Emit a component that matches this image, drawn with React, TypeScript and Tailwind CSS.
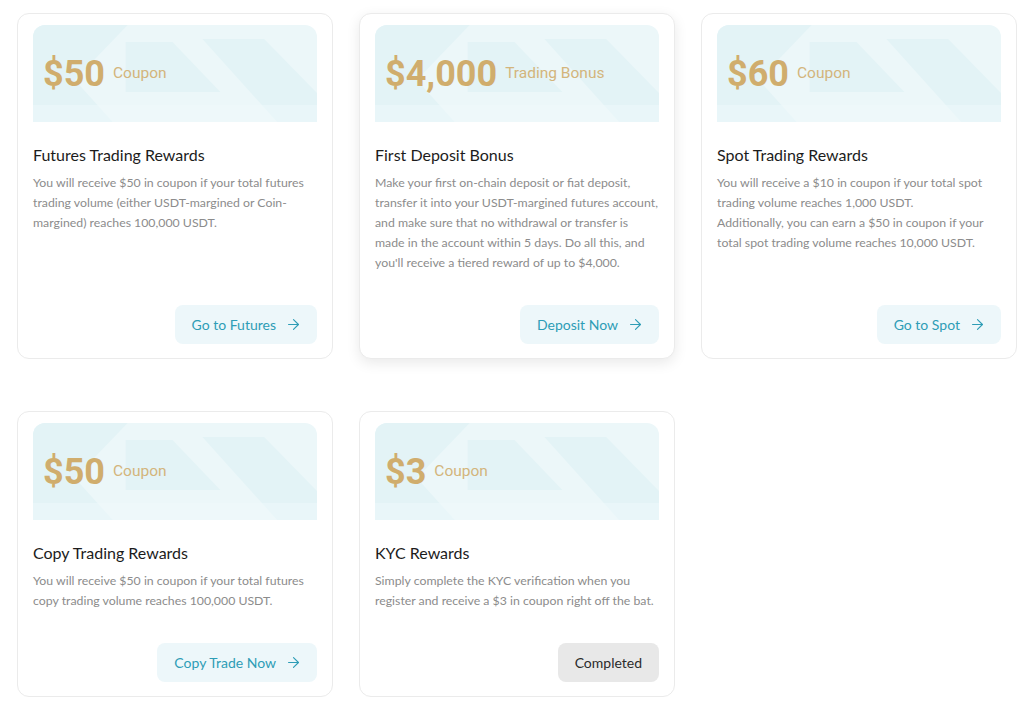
import React from 'react';
import { ArrowRight } from 'lucide-react';

type Reward = {
  amount: string;
  unit: string;
  title: string;
  text: string[];
  action: string;
  done?: boolean;
  raised?: boolean;
};

const rewards: Reward[] = [
  {
    amount: '$50',
    unit: 'Coupon',
    title: 'Futures Trading Rewards',
    text: ['You will receive $50 in coupon if your total futures trading volume (either USDT-margined or Coin-margined) reaches 100,000 USDT.'],
    action: 'Go to Futures',
  },
  {
    amount: '$4,000',
    unit: 'Trading Bonus',
    title: 'First Deposit Bonus',
    text: [
      "Make your first on-chain deposit or fiat deposit, transfer it into your USDT-margined futures account, and make sure that no withdrawal or transfer is made in the account within 5 days. Do all this, and you'll receive a tiered reward of up to $4,000.",
    ],
    action: 'Deposit Now',
    raised: true,
  },
  {
    amount: '$60',
    unit: 'Coupon',
    title: 'Spot Trading Rewards',
    text: [
      'You will receive a $10 in coupon if your total spot trading volume reaches 1,000 USDT.',
      'Additionally, you can earn a $50 in coupon if your total spot trading volume reaches 10,000 USDT.',
    ],
    action: 'Go to Spot',
  },
  {
    amount: '$50',
    unit: 'Coupon',
    title: 'Copy Trading Rewards',
    text: ['You will receive $50 in coupon if your total futures copy trading volume reaches 100,000 USDT.'],
    action: 'Copy Trade Now',
  },
  {
    amount: '$3',
    unit: 'Coupon',
    title: 'KYC Rewards',
    text: ['Simply complete the KYC verification when you register and receive a $3 in coupon right off the bat.'],
    action: 'Completed',
    done: true,
  },
];

function BannerPattern() {
  return (
    <svg className="absolute inset-0 h-full w-full" viewBox="0 0 285 97" preserveAspectRatio="none">
      <rect width="285" height="97" fill="#ecf7f9" />
      <polygon points="0,0 95,0 42,55 80,97 0,97" fill="#e3f3f6" />
      <polygon points="93,17 140,17 188,67 93,67" fill="#e3f3f6" />
      <polygon points="170,14 232,14 285,68 285,97 245,97" fill="#e3f3f6" />
      <rect y="80" width="285" height="17" fill="#f0f9fb" opacity="0.5" />
    </svg>
  );
}

function RewardCard({ r }: { r: Reward }) {
  return (
    <div
      className={`flex flex-col rounded-[12px] border border-[#ebebeb] bg-white px-[15px] pt-[11px] pb-[14px] ${
        r.raised ? 'shadow-[0_4px_14px_rgba(0,0,0,0.09)]' : ''
      }`}
    >
      <div className="relative h-[97px] overflow-hidden rounded-t-[12px]">
        <BannerPattern />
        <div className="relative flex h-full items-center gap-[8px] pl-[10px] font-['Roboto',sans-serif] text-[#d0ad6d]">
          <span className="text-[36px] leading-none font-bold">{r.amount}</span>
          <span className="text-[15.5px] leading-none text-[#d3b57c]">{r.unit}</span>
        </div>
      </div>
      <h3 className="mt-[22px] text-[16px] leading-[22px] text-[#1c1c1c]">{r.title}</h3>
      <div className="mt-[7px] flex-1 text-[12.3px] leading-[20px] text-[#8c8c8c]">
        {r.text.map((t) => (
          <p key={t}>{t}</p>
        ))}
      </div>
      <div className="mt-[32px] flex justify-end">
        {r.done ? (
          <button className="h-[39px] rounded-[8px] bg-[#e8e8e8] px-[17px] text-[14px] text-[#2b2b2b]">
            {r.action}
          </button>
        ) : (
          <button className="flex h-[39px] items-center gap-[9px] rounded-[8px] bg-[#edf7fa] pr-[15px] pl-[17px] text-[14px] text-[#2e9db6]">
            {r.action}
            <ArrowRight size={17} strokeWidth={1.6} />
          </button>
        )}
      </div>
    </div>
  );
}

export default function App() {
  return (
    <div className="min-h-screen bg-white pt-[13px] pl-[17px] font-['Lato',sans-serif]">
      <div className="grid grid-cols-[316px_316px_316px] gap-x-[26px] gap-y-[52px]">
        {rewards.map((r) => (
          <RewardCard key={r.title} r={r} />
        ))}
      </div>
    </div>
  );
}
